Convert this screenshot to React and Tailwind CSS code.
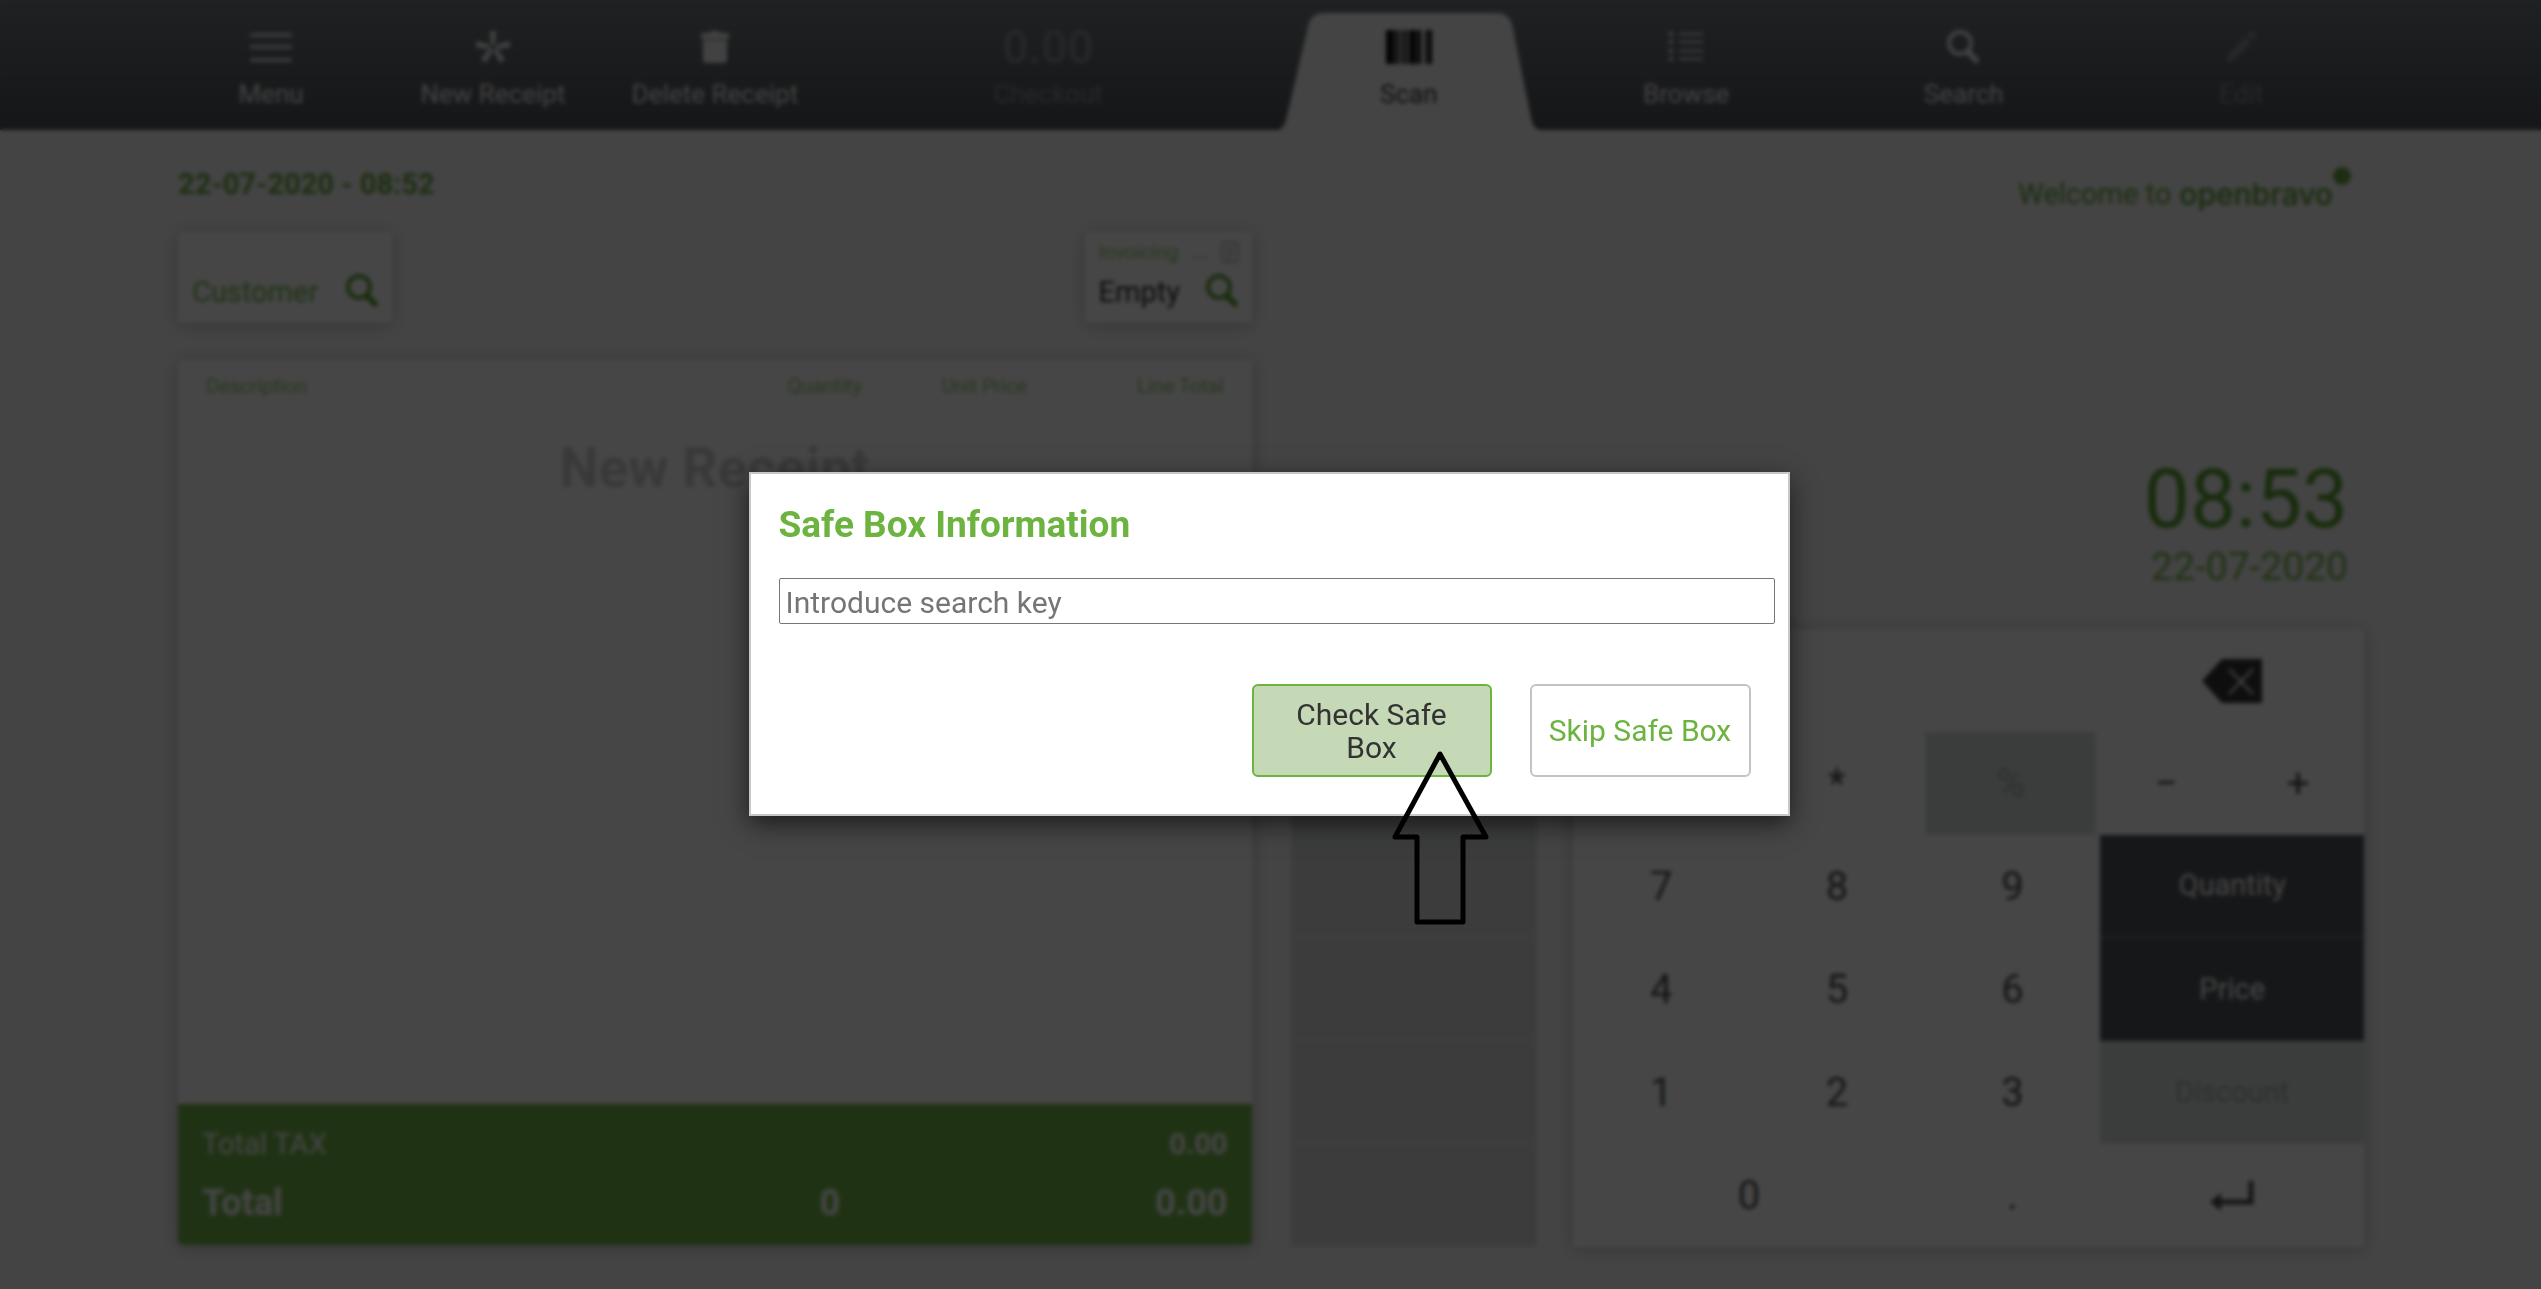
import React from "react";

function MenuIcon() {
  return (
    <svg viewBox="0 0 42 32" className="h-8 w-[42px]" fill="none" stroke="currentColor" strokeWidth="3">
      <path d="M0 4H42M0 16H42M0 29H42" />
    </svg>
  );
}

function AsteriskIcon() {
  return (
    <svg viewBox="0 0 34 32" className="h-8 w-[34px]" fill="currentColor">
      <path d="M14 0h6l-1 14h-4zM33 10l2 6-14 2-1-4zM29 28l-5 4-7-13 3-2zM10 32l-5-4 9-11 3 2zM-1 16l2-6 13 4-1 4z" />
    </svg>
  );
}

function TrashIcon() {
  return (
    <svg viewBox="0 0 28 32" className="h-8 w-7" fill="currentColor">
      <path d="M9 0h10v2h7a2 2 0 0 1 2 2v4H0V4a2 2 0 0 1 2-2h7z" />
      <path d="M2 9h24v20a3 3 0 0 1-3 3H5a3 3 0 0 1-3-3z" />
    </svg>
  );
}

function BarcodeIcon() {
  return (
    <svg viewBox="0 0 46 34" className="h-[34px] w-[46px]" fill="currentColor">
      <path d="M0 0h8v34H0zM9 0h3v34H9zM14 0h2v34h-2zM18 0h3v34h-3zM23 0h7v34h-7zM31 0h4v34h-4zM39 0h2v34h-2zM42 0h4v34h-4z" />
    </svg>
  );
}

function ListIcon() {
  return (
    <svg viewBox="0 0 34 32" className="h-8 w-[34px]" fill="currentColor">
      <path d="M0 1h4v4H0zM0 9h4v4H0zM0 18h4v4H0zM0 26h4v4H0zM10 2h24v2H10zM10 10h24v2H10zM10 19h24v2H10zM10 27h24v2H10z" />
    </svg>
  );
}

function PencilIcon() {
  return (
    <svg viewBox="0 0 30 32" className="h-8 w-[30px]" fill="currentColor">
      <path d="M0 32l3-9L19 6l6 6L9 28zM21 4l3-3q2-2 4 0l1 1q2 2 0 4l-2 4z" />
    </svg>
  );
}

function LensIcon({ className }) {
  return (
    <svg viewBox="0 0 34 34" className={className} fill="none" stroke="currentColor">
      <circle cx="13" cy="13" r="11" strokeWidth="4" />
      <path d="M21 22l8 8" strokeWidth="6" strokeLinecap="round" />
    </svg>
  );
}

function DocIcon() {
  return (
    <svg viewBox="0 0 18 22" className="h-[22px] w-[18px]" fill="none" stroke="currentColor" strokeWidth="1">
      <rect x="1" y="1" width="16" height="20" rx="2" />
      <path d="M5 6h8M5 10h8M5 14h8M5 18h5" />
    </svg>
  );
}

function BackspaceIcon() {
  return (
    <svg viewBox="0 0 60 44" className="h-11 w-[60px]">
      <path d="M0 22L20 0H60V44H20z" fill="#2a2a2a" />
      <path d="M27 10L51 35M51 10L27 35" stroke="#fff" strokeWidth="2" />
    </svg>
  );
}

function EnterIcon() {
  return (
    <svg viewBox="0 0 44 32" className="h-8 w-11" fill="none" stroke="currentColor">
      <path d="M41 1V22H10" strokeWidth="5" />
      <path d="M0 22L11 13V31z" fill="currentColor" stroke="none" />
    </svg>
  );
}

function NavButton({ icon, label, className = "", muted }) {
  return (
    <button
      type="button"
      className={
        "flex h-[130px] flex-col items-center pt-[31px] " +
        (muted ? "text-[#85898f] " : "text-[#f0f0f0] ") +
        className
      }
    >
      <span className="flex h-8 items-center">{icon}</span>
      <span className="mt-[15px] text-[26px] leading-8">{label}</span>
    </button>
  );
}

const CARD = "rounded-[4px] bg-white shadow-[0_2px_18px_rgba(0,0,0,0.25)]";

function Key({ children, className = "", label }) {
  return (
    <button
      type="button"
      aria-label={label}
      className={"flex items-center justify-center " + className}
    >
      {children}
    </button>
  );
}

function Keypad() {
  return (
    <div className={"grid flex-1 auto-rows-[103px] grid-cols-[repeat(18,minmax(0,1fr))] text-[40px] text-[#444] " + CARD}>
      <div className="col-span-12" />
      <Key className="col-span-6" label="Backspace"><BackspaceIcon /></Key>
      <Key className="col-span-4">/</Key>
      <Key className="col-span-4">*</Key>
      <Key className="col-span-4 mr-1 bg-[#d5dbda] text-[#9fa8ae]">%</Key>
      <Key className="col-span-3">−</Key>
      <Key className="col-span-3">+</Key>
      <Key className="col-span-4">7</Key>
      <Key className="col-span-4">8</Key>
      <Key className="col-span-4">9</Key>
      <Key className="col-span-6 border-b-2 border-[#6b6f74] bg-[#484c51]">
        <span className="text-[29px] text-white">Quantity</span>
      </Key>
      <Key className="col-span-4">4</Key>
      <Key className="col-span-4">5</Key>
      <Key className="col-span-4">6</Key>
      <Key className="col-span-6 bg-[#484c51]">
        <span className="text-[29px] text-white">Price</span>
      </Key>
      <Key className="col-span-4">1</Key>
      <Key className="col-span-4">2</Key>
      <Key className="col-span-4">3</Key>
      <Key className="col-span-6 bg-[#d5dbda]">
        <span className="text-[29px] text-[#9fa8ae]">Discount</span>
      </Key>
      <Key className="col-span-8">0</Key>
      <Key className="col-span-4">.</Key>
      <Key className="col-span-6" label="Enter"><EnterIcon /></Key>
    </div>
  );
}

function Header() {
  return (
    <header className="flex bg-linear-to-b from-[#6b7077] to-[#44474c] pr-[161px] pl-40">
      <nav className="grid flex-1 grid-cols-5">
        <NavButton icon={<MenuIcon />} label="Menu" />
        <NavButton icon={<AsteriskIcon />} label="New Receipt" />
        <NavButton icon={<TrashIcon />} label="Delete Receipt" />
        <NavButton
          className="col-span-2"
          muted
          icon={<span className="text-[46px] leading-8 font-medium">0.00</span>}
          label="Checkout"
        />
      </nav>
      <nav className="grid flex-1 grid-cols-4">
        <button type="button" className="relative flex h-[130px] flex-col items-center pt-[31px] text-black">
          <svg viewBox="0 0 277 130" preserveAspectRatio="none" className="absolute inset-0 size-full">
            <path d="M8 130Q14 128 16 120L38 26Q41 13 54 13H226Q239 13 242 26L261 120Q263 128 269 130z" fill="#f7f7f7" />
          </svg>
          <span className="relative flex h-8 items-center"><BarcodeIcon /></span>
          <span className="relative mt-[15px] text-[26px] leading-8 text-[#333]">Scan</span>
        </button>
        <NavButton icon={<ListIcon />} label="Browse" />
        <NavButton icon={<LensIcon className="size-[34px]" />} label="Search" />
        <NavButton muted icon={<PencilIcon />} label="Edit" />
      </nav>
    </header>
  );
}

function Receipt() {
  return (
    <section className="flex flex-1 flex-col px-[18px] pt-9 pb-11">
      <p className="text-[29px] leading-9 font-bold text-[#5fa335]">22-07-2020 - 08:52</p>
      <div className="mt-[30px] flex justify-between">
        <button type="button" className={"flex h-[91px] w-[214px] items-end justify-between pr-3 pb-[15px] pl-[14px] " + CARD}>
          <span className="text-[29px] leading-8 text-[#6cb33f]">Customer</span>
          <LensIcon className="size-[34px] text-[#509a22]" />
        </button>
        <button type="button" className={"flex h-[91px] w-[167px] flex-col justify-between pt-2 pr-3 pb-[15px] pl-[14px] " + CARD}>
          <span className="flex w-full items-center justify-between text-xl leading-6 text-[#8cc46b]">
            <span>Invoicing</span>
            <span className="text-[#999]">...</span>
            <span className="text-[#777]"><DocIcon /></span>
          </span>
          <span className="flex w-full items-end justify-between">
            <span className="text-[29px] leading-8 text-[#222]">Empty</span>
            <LensIcon className="size-[34px] text-[#509a22]" />
          </span>
        </button>
      </div>
      <div className={"mt-[37px] flex flex-1 flex-col overflow-hidden " + CARD}>
        <div className="flex pt-[14px] pr-7 pl-7 text-xl leading-6 text-[#8cc46b]">
          <span className="flex-1">Description</span>
          <span className="w-[154px]">Quantity</span>
          <span className="w-[88px]">Unit Price</span>
          <span className="w-[194px] text-right">Line Total</span>
        </div>
        <p className="mt-[38px] text-center text-[55px] leading-[64px] font-bold text-[#ccc]">New Receipt</p>
        <div className="mt-auto bg-[#6cb33f] px-6 pt-[22px] pb-5 text-white">
          <div className="flex justify-between text-[29px] leading-9">
            <span>Total TAX</span>
            <span className="font-bold">0.00</span>
          </div>
          <div className="mt-[19px] flex text-4xl leading-11 font-bold">
            <span className="flex-1">Total</span>
            <span className="w-[122px]">0</span>
            <span className="w-[286px] text-right">0.00</span>
          </div>
        </div>
      </div>
    </section>
  );
}

function RightPane() {
  return (
    <section className="flex flex-1 flex-col pt-[46px] pr-4 pb-[42px] pl-[21px]">
      <div className="flex justify-end pr-[13px] leading-9 text-[#5fa335]">
        <span className="text-[29px]">Welcome to</span>
        <span className="ml-2 font-['Inter',sans-serif] text-[30px] font-medium text-[#509a22]">openbravo</span>
        <svg viewBox="0 0 18 18" className="-mt-[9px] size-[18px]" fill="currentColor">
          <circle cx="9" cy="9" r="9" />
        </svg>
      </div>
      <div className="mt-auto pr-4 text-right">
        <p className="text-[82px] leading-20 text-[#509a22]">08:53</p>
        <p className="mt-2 text-[39px] leading-10 text-[#6cb33f]">22-07-2020</p>
      </div>
      <div className="mt-[42px] flex gap-9">
        <div className="grid w-[23%] auto-rows-[103px]">
          {[0, 1, 2, 3, 4, 5].map((i) => (
            <div key={i} className="border-b-2 border-[#dcdfdf] bg-[#d6d9d9]" />
          ))}
        </div>
        <Keypad />
      </div>
    </section>
  );
}

function SafeBoxDialog() {
  return (
    <div
      role="dialog"
      aria-labelledby="safe-box-title"
      className="relative w-[1041px] border-2 border-[#c8c8c8] bg-white pt-[29px] pr-[13px] pb-[37px] pl-7 shadow-[0_8px_24px_rgba(0,0,0,0.6)]"
    >
      <h1 id="safe-box-title" className="text-[37px] leading-11 font-bold text-[#6cb33f]">Safe Box Information</h1>
      <input
        type="text"
        aria-label="Search key"
        placeholder="Introduce search key"
        className="mt-[31px] block h-[46px] w-full rounded-[2px] border border-[#767676] bg-white px-[6px] pt-[2px] text-[30px] outline-none placeholder:text-[#757575]"
      />
      <div className="mt-[60px] flex justify-end gap-[38px] pr-6">
        <button type="button" className="h-[93px] w-[240px] rounded-md border-2 border-[#6cb33f] bg-[#c5d9b7] px-8 text-[30px] leading-[33px] text-[#333]">
          Check Safe Box
        </button>
        <button type="button" className="h-[93px] w-[221px] rounded-md border-2 border-[#c3c3c3] bg-white text-[30px] leading-[33px] text-[#6cb33f]">
          Skip Safe Box
        </button>
      </div>
      <svg viewBox="0 0 98 176" className="pointer-events-none absolute top-[276px] left-[640px] h-44 w-[98px]" fill="none" stroke="#000" strokeWidth="5" strokeLinejoin="round">
        <path d="M49 4L4 87H26V172H72V87H95z" />
      </svg>
    </div>
  );
}

export default function App() {
  return (
    <div className="relative font-[Roboto,sans-serif]">
      <div className="flex min-h-screen flex-col bg-[#f7f7f7]">
        <Header />
        <main className="flex flex-1 pr-[161px] pl-40">
          <Receipt />
          <RightPane />
        </main>
      </div>
      <div className="absolute inset-0 flex items-center justify-center bg-[#060606]/74 pr-[3px] pb-px backdrop-blur-[2px]">
        <SafeBoxDialog />
      </div>
    </div>
  );
}
